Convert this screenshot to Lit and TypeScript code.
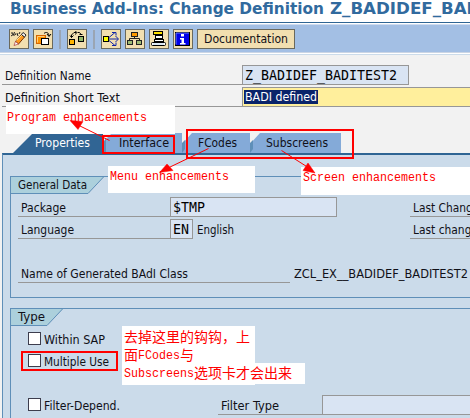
import { LitElement, html, css, svg } from "lit";
import { customElement, property } from "lit/decorators.js";

/** A run of text squeezed or stretched horizontally to a given width. */
@customElement("fit-text")
class FitText extends LitElement {
  @property({ type: Number }) w = 0;
  static styles = css`
    :host { display: inline-block; white-space: pre; flex: none; }
    .run { display: inline-block; transform-origin: 0 50%; }
  `;
  render() {
    return html`<span class="run"><slot></slot></span>`;
  }
  firstUpdated() {
    const run = this.renderRoot.querySelector(".run") as HTMLElement;
    const natural = run.getBoundingClientRect().width;
    this.style.width = `${this.w}px`;
    if (natural) run.style.transform = `scaleX(${this.w / natural})`;
  }
}

const t = (text: string, w: number) => html`<fit-text .w=${w}>${text}</fit-text>`;

const icons = {
  change: svg`
    <path d="M2 4h2v2h2M5 3l2 3M8 4l1 3M11 3l-1 2" stroke="#222" fill="none"/>
    <path d="M2 7l3-2" stroke="#222"/>
    <path d="M6.500 12.500L12.500 5.500L15.500 8L9.500 15Z" fill="#ff9a1c" stroke="#7b3000"/>
    <path d="M7.500 11.500L13 6" stroke="#ffe08a"/>
    <path d="M12.500 5.500L14 3.500L17 6L15.500 8Z" fill="#fff" stroke="#222"/>
    <path d="M6.500 12.500L5 16.500L9.500 15Z" fill="#fff" stroke="#a33" stroke-width=".7"/>`,
  other: svg`
    <rect x="3.500" y="6.500" width="9" height="8" fill="#ff9200" stroke="#d66500"/>
    <path d="M4.500 13.500v-6h7" stroke="#ffcf7a" fill="none"/>
    <rect x="8.500" y="9.500" width="7" height="6" fill="#fff" stroke="#000"/>
    <path d="M11 4.500c2-2 5-1 5 2.500M14 5l2 2.500l2-2.500" stroke="#000" fill="none"/>`,
  check: svg`
    <rect x="2.500" y="10.500" width="5" height="5" fill="#ffb400" stroke="#000"/>
    <rect x="11.500" y="7.500" width="5" height="5" fill="#94b86b" stroke="#000"/>
    <path d="M4.500 8.500V6l2.500-2.500H9M10.500 3.500h2L14.500 6" stroke="#000" fill="none"/>
    <path d="M3 6.500l1.500 2L6.500 6.500M12.500 5.500h3M8.500 2l1 1.500l-1 2" stroke="#000" fill="none"/>`,
  where: svg`
    <rect x="2.500" y="7.500" width="5" height="5" fill="#ffff00" stroke="#000"/>
    <path d="M8 10h9M8 8.500L14 3.500M8 11.500L14 16.500M11 3.500h4v3M11 16.500h4v-3M14.500 7l3 3l-3 3" stroke="#1024a8" fill="none"/>`,
  tree: svg`
    <path d="M9.500 7v3M4.500 12V9.500h10V12" stroke="#222" fill="none"/>
    <rect x="6.500" y="3.500" width="6" height="4" fill="#ff9a00" stroke="#222"/>
    <rect x="2.500" y="11.500" width="5" height="4" fill="#9dbb74" stroke="#222"/>
    <rect x="11.500" y="11.500" width="5" height="4" fill="#9dbb74" stroke="#222"/>`,
  stack: svg`
    <rect x="4.500" y="2.500" width="9" height="3" fill="#ffe100" stroke="#000"/>
    <rect x="6.500" y="6.500" width="7" height="3" fill="#fff" stroke="#000"/>
    <rect x="5.500" y="10.500" width="9" height="2" fill="#fff" stroke="#000"/>
    <rect x="2.500" y="13.500" width="14" height="3" rx="1" fill="#fff" stroke="#000"/>
    <path d="M4 15h11" stroke="#b8d0e8"/>`,
  info: svg`
    <rect x="2.500" y="3.500" width="14" height="13" fill="#0000e8" stroke="#000"/>
    <path d="M3 15.500V4h13" stroke="#6a7cff" fill="none"/>
    <path d="M8 5h3v2.500H8zM7 9h4v5h1.500v1.500H7V14h1.500v-3.500H7z" fill="#fff"/>`,
};

@customElement("tool-button")
class ToolButton extends LitElement {
  @property() icon: keyof typeof icons = "info";
  static styles = css`
    :host { display: block; box-sizing: border-box; width: 20px; height: 20px; background: #f2dfb0; border: 1px solid #6b695c; }
    svg { display: block; margin: -1px; }
  `;
  render() {
    return html`<svg width="20" height="20" viewBox="0 0 20 20">${icons[this.icon]}</svg>`;
  }
}

@customElement("app-root")
class AppRoot extends LitElement {
  static styles = css`
    :host { display: block; position: relative; width: 470px; height: 418px; overflow: hidden; background: #f2f2f2;
      font: 12px/20px "DejaVu Sans Condensed", "DejaVu Sans", sans-serif; color: #101018; }
    * { box-sizing: border-box; }
    .title { height: 23px; padding: 0 0 0 10px; background: #fff; border-bottom: 1px solid #2f6594; display: flex;
      font: bold 16px/18px "DejaVu Sans Condensed", "DejaVu Sans", sans-serif; color: #316a9e; white-space: pre; overflow: hidden; }
    .gap6 { width: 6px; flex: none; }
    .bar { background: #fff; border-top: 1px solid #fff; height: 32px; border-bottom: 1px solid #cbdbea; }
    .toolbar { height: 29px; display: flex; align-items: flex-start; padding: 4px 0 0 9px; gap: 4px;
      background: #a3bfe4; border-top: 1px solid #cfdcf0; border-bottom: 1px solid #cbd5e4; }
    .sep { width: 2px; height: 19px; margin: 1px 2px 0; background: #9aa5b3; }
    .doc { height: 20px; width: 98px; padding-left: 6px; border: 1px solid #6b695c; background: #f2dfb0; line-height: 19px; }
    .form { padding: 10px 0 0 2px; height: 78px; }
    .row { display: flex; height: 20px; margin-bottom: 2px; }
    .lab { height: 20px; border-bottom: 1px solid #979797; padding-left: 3px; line-height: 22px; flex: none; overflow: hidden; }
    .inp { height: 20px; border: 1px solid #979797; background: #d9e4f3; padding-left: 2px; line-height: 18px; flex: none; }
    .mono { font-family: "DejaVu Sans Mono", monospace; font-size: 13.5px; color: #000; }
    .w240 { width: 240px; } .w167 { width: 167px; } .w23 { width: 23px; } .w152 { width: 152px; } .w272 { width: 272px; }
    .focus { background: #ffef9c; width: 240px; padding: 2px 0 0 1px; }
    .sel { display: inline-block; vertical-align: top; height: 14px; line-height: 14px; padding: 0 1px; background: #0a246a; color: #fff; }
    .tabs { display: flex; height: 20px; margin-left: 2px; align-items: flex-end; }
    .tab { position: relative; height: 20px; line-height: 21px; flex: none; }
    .tab svg { position: absolute; left: 0; top: 0; }
    .tab fit-text { position: relative; }
    .props { width: 100px; padding-left: 33px; color: #fff; }
    .iface { width: 80px; padding-left: 17px; }
    .fcodes { width: 68px; padding-left: 16px; }
    .subs { width: 91px; padding-left: 16px; }
    .panel { margin-left: 2px; border-top: 2px solid #2f6594; border-left: 1px solid #5f8fb8; background: #cbdbea; height: 265px; padding: 21px 0 0 7px; }
    .group { border: solid #5f8fb8; border-width: 1px 0 1px 1px; height: 122px; margin-bottom: 10px; }
    .head { position: relative; height: 18px; }
    .head svg { position: absolute; left: 0; top: -1px; }
    .head fit-text { position: relative; margin-left: 7px; line-height: 16px; vertical-align: top; }
    .rows { padding: 2px 0 0 7px; }
    .free { padding-left: 4px; line-height: 22px; flex: none; }
    .right { margin-left: 73px; width: 80px; }
    .far { margin-left: 176px; }
    .blank { margin-top: 24px; }
    .type { height: 130px; }
    .checks { padding: 2px 0 0 17px; }
    .check { display: flex; height: 20px; margin-bottom: 2px; align-items: flex-start; }
    .row.blank, .check.blank { margin-top: 24px; }
    .rows, .checks { display: flex; flex-direction: column; }
    .row.blank, .check.blank { margin-top: 22px; }
    .box { width: 13px; height: 13px; margin: 3px 3px 0 0; border: 1px solid #3d3d4d; background: #fff; flex: none; }
    .check fit-text { line-height: 22px; height: 20px; }
    .ft { margin-left: 98px; width: 104px; }
    .wide { width: 160px; }
    .note { position: absolute; background: #fff; color: #f00; font: 12.5px/16px "Liberation Mono", "Noto Sans CJK SC", monospace; }
    .n1 { left: 6px; top: 105px; width: 169px; height: 29px; padding: 5px 0 0 1px; }
    .n2 { left: 108px; top: 166px; width: 147px; height: 27px; padding: 2px 0 0 2px; line-height: 18px; }
    .n3 { left: 301px; top: 167px; width: 169px; height: 28px; padding: 2px 0 0 2px; line-height: 18px; }
    .n4 { left: 122px; top: 326px; width: 133px; height: 59px; padding: 3px 0 0 2px; line-height: 18px; }
    .n5 { left: 250px; top: 363px; width: 55px; height: 21px; }
    .cn { display: flex; height: 18px; font-family: "Liberation Mono", "Noto Sans CJK SC", monospace; font-size: 14px; }
    .lat { font-size: 12.5px; display: flex; }
    .mark { position: absolute; border: 2px solid #f00; z-index: 3; }
    .m1 { left: 102px; top: 135px; width: 73px; height: 19px; }
    .m2 { left: 186px; top: 129px; width: 168px; height: 30px; }
    .m3 { left: 21px; top: 351px; width: 97px; height: 20px; }
    .arrows { position: absolute; left: 0; top: 0; z-index: 4; }
  `;

  render() {
    return html`
      <div class="title">${t("Business Add-Ins: Change Definition", 314)}<span class="gap6"></span>${t("Z_BADIDEF_", 111)}${t("BADITEST2", 103)}</div>
      <div class="bar"><div class="toolbar">
        <tool-button icon="change"></tool-button>
        <tool-button icon="other"></tool-button>
        <span class="sep"></span>
        <tool-button icon="check"></tool-button>
        <span class="sep"></span>
        <tool-button icon="where"></tool-button>
        <tool-button icon="tree"></tool-button>
        <tool-button icon="stack"></tool-button>
        <tool-button icon="info"></tool-button>
        <div class="doc">${t("Documentation", 84)}</div>
      </div></div>
      <div class="form">
        <div class="row"><div class="lab w240">${t("Definition Name", 86)}</div><div class="inp mono w167">${t("Z_BADIDEF_BADITEST2", 152)}</div></div>
        <div class="row"><div class="lab w240">${t("Definition Short Text", 115)}</div><div class="inp focus"><span class="sel">${t("BADI defined", 72)}</span></div></div>
      </div>
      <div class="tabs">
        <div class="tab props"><svg width="102" height="20"><path d="M11 20L30 1H101V20Z" fill="#316594"/></svg>${t("Properties", 55)}</div>
        <div class="tab iface"><svg width="80" height="20"><path d="M0 20V10L10 0H80V20Z" fill="#84aad8"/><path d="M0 20V12L4 5V20Z" fill="#5f8fb8"/></svg>${t("Interface", 50)}</div>
        <div class="tab fcodes"><svg width="68" height="20"><path d="M0 20V11L10 0H68V20Z" fill="#84aad8"/><path d="M0 20V10L3 7V16Z" fill="#5f8fb8"/></svg>${t("FCodes", 39)}</div>
        <div class="tab subs"><svg width="91" height="20"><path d="M0 20V11L10 0H91V20Z" fill="#84aad8"/><path d="M0 20V10L3 7V16Z" fill="#5f8fb8"/></svg>${t("Subscreens", 62)}</div>
      </div>
      <div class="panel">
        <div class="group">
          <div class="head"><svg width="95" height="19"><path d="M0 1H93L77 17.500H0Z" fill="#acd0dc"/><path d="M0 17.500H77L93 .5H0" fill="none" stroke="#5f8fb8"/></svg>${t("General Data", 69)}</div>
          <div class="rows">
            <div class="row"><div class="lab w152">${t("Package", 45)}</div><div class="inp mono w167">${t("$TMP", 32)}</div><div class="lab right">${t("Last Changed By", 90)}</div></div>
            <div class="row"><div class="lab w152">${t("Language", 53)}</div><div class="inp mono w23">${t("EN", 16)}</div><div class="free">${t("English", 37)}</div><div class="lab far">${t("Last change", 65)}</div></div>
            <div class="row blank"><div class="lab w272">${t("Name of Generated BAdI Class", 167)}</div><div class="free">${t("ZCL_EX__BADIDEF_BADITEST2", 174)}</div></div>
          </div>
        </div>
        <div class="group type">
          <div class="head"><svg width="54" height="19"><path d="M0 1H52L36 17.500H0Z" fill="#acd0dc"/><path d="M0 17.500H36L52 .5H0" fill="none" stroke="#5f8fb8"/></svg>${t("Type", 27)}</div>
          <div class="checks">
            <div class="check"><span class="box"></span>${t("Within SAP", 61)}</div>
            <div class="check"><span class="box"></span>${t("Multiple Use", 65)}</div>
            <div class="check blank"><span class="box"></span>${t("Filter-Depend.", 76)}<div class="lab ft">${t("Filter Type", 58)}</div><div class="inp wide"></div></div>
          </div>
        </div>
      </div>
      <div class="note n1">${t("Program enhancements", 140)}</div>
      <div class="note n2">${t("Menu enhancements", 119)}</div>
      <div class="note n3">${t("Screen enhancements", 133)}</div>
      <div class="note n5"></div>
      <div class="note n4">
        <div class="cn">${t("去掉这里的钩钩，上", 126)}</div>
        <div class="cn">${t("面", 14)}<span class="lat">${t("FCodes", 42)}</span>${t("与", 14)}</div>
        <div class="cn"><span class="lat">${t("Subscreens", 70)}</span>${t("选项卡才会出来", 98)}</div>
      </div>
      <div class="mark m1"></div><div class="mark m2"></div><div class="mark m3"></div>
      <svg class="arrows" width="470" height="418" fill="#f00" stroke="#f00">
        <path d="M109.500 140.500L78 125M208.500 148.500L168 168M281.500 150.500L309 168" fill="none"/>
        <path d="M70 120.500L83 121.500L78 129.500ZM159.500 172.500L167 164L173 170.500ZM315 173L303 170.500L308 163Z" stroke-width=".5"/>
      </svg>
    `;
  }
}
